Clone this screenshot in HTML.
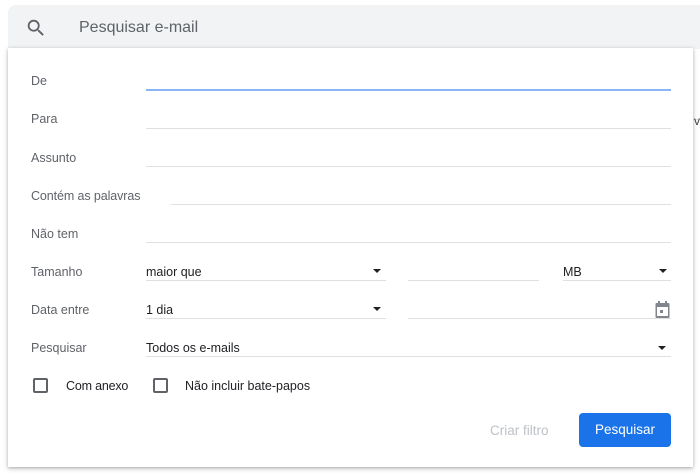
<!DOCTYPE html>
<html><head><meta charset="utf-8"><style>
*{margin:0;padding:0;box-sizing:border-box}
body{width:700px;height:473px;background:#fff;position:relative;overflow:hidden;font-family:"Liberation Sans",Arial,sans-serif}
.bar{position:absolute;left:8px;top:5px;width:692px;height:44px;background:#f1f3f4;border-radius:8px 0 0 0}
.ph{position:absolute;left:79px;top:19px;font-size:16px;color:#5f6368}
.panel{position:absolute;left:8px;top:48px;width:685px;height:419px;background:#fff;box-shadow:0 1px 3px rgba(60,64,67,.35),0 2px 6px rgba(60,64,67,.15)}
.a{position:absolute;font-size:12.5px;color:#5f6368}
.v{position:absolute;font-size:12.5px;color:#202124}
.l{position:absolute;height:1px;background:#e0e0e0}
.arr{position:absolute;width:0;height:0;border-left:4px solid transparent;border-right:4px solid transparent;border-top:4px solid #202124}
.cb{position:absolute;width:15px;height:15px;border:2px solid #5f6368;border-radius:2px}
</style></head><body>
<div style="position:absolute;left:693px;top:119px;width:7px;height:1px;background:#e0e0e0"></div>
<div style="position:absolute;left:694px;top:114px;font-size:12px;color:#444">v</div>
<div class="bar"></div>
<svg style="position:absolute;left:25px;top:17px" width="22" height="22" viewBox="0 0 24 24"><path fill="#5f6368" d="M15.5 14h-.79l-.28-.27A6.47 6.47 0 0 0 16 9.5 6.5 6.5 0 1 0 9.5 16c1.61 0 3.09-.59 4.23-1.57l.27.28v.79l5 4.99L20.49 19l-4.99-5zm-6 0C7.01 14 5 11.99 5 9.5S7.01 5 9.5 5 14 7.01 14 9.5 11.99 14 9.5 14z"/></svg>
<div class="ph">Pesquisar e-mail</div>
<div class="panel"></div>
<div class="a" style="left:31px;top:74px">De</div>
<div class="l" style="left:146px;top:89px;width:525px;height:2px;background:#8ab4f8"></div>
<div class="a" style="left:31px;top:112px">Para</div>
<div class="l" style="left:146px;top:128px;width:525px"></div>
<div class="a" style="left:31px;top:151px">Assunto</div>
<div class="l" style="left:146px;top:166px;width:525px"></div>
<div class="a" style="left:31px;top:189px;letter-spacing:-0.1px">Contém as palavras</div>
<div class="l" style="left:171px;top:204px;width:500px"></div>
<div class="a" style="left:31px;top:227px">Não tem</div>
<div class="l" style="left:146px;top:242px;width:525px"></div>
<div class="a" style="left:31px;top:265px">Tamanho</div>
<div class="v" style="left:146px;top:265px">maior que</div>
<div class="arr" style="left:373px;top:269px"></div>
<div class="l" style="left:146px;top:280px;width:240px"></div>
<div class="l" style="left:408px;top:280px;width:131px"></div>
<div class="v" style="left:563px;top:265px">MB</div>
<div class="arr" style="left:659px;top:269px"></div>
<div class="l" style="left:563px;top:280px;width:108px"></div>
<div class="a" style="left:31px;top:303px">Data entre</div>
<div class="v" style="left:146px;top:303px">1 dia</div>
<div class="arr" style="left:373px;top:307px"></div>
<div class="l" style="left:146px;top:318px;width:240px"></div>
<div class="l" style="left:408px;top:318px;width:263px"></div>
<svg style="position:absolute;left:655px;top:301px" width="15" height="17" viewBox="0 0 15 17"><path fill="#80868b" d="M3 0h2v2h5V0h2v2h1.5a1 1 0 0 1 1 1v13a1 1 0 0 1-1 1h-12a1 1 0 0 1-1-1V3a1 1 0 0 1 1-1H3zM2 6v9h11V6zm3 3h3v3H5z"/></svg>
<div class="a" style="left:31px;top:341px">Pesquisar</div>
<div class="v" style="left:146px;top:341px">Todos os e-mails</div>
<div class="arr" style="left:658px;top:346px"></div>
<div class="l" style="left:146px;top:356px;width:525px"></div>
<div class="cb" style="left:33px;top:378px"></div>
<div class="v" style="left:66px;top:379px;letter-spacing:-0.2px">Com anexo</div>
<div class="cb" style="left:153px;top:378px"></div>
<div class="v" style="left:185px;top:379px">Não incluir bate-papos</div>
<div style="position:absolute;left:490px;top:423px;font-size:13.5px;color:#bdc1c6">Criar filtro</div>
<div style="position:absolute;left:579px;top:413px;width:92px;height:34px;background:#1a73e8;border-radius:4px;color:#fff;font-size:13.5px;text-align:center;line-height:34px">Pesquisar</div>
</body></html>
